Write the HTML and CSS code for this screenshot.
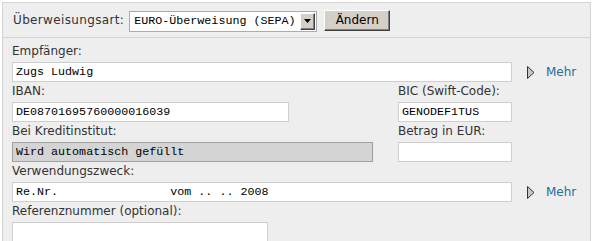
FILE: index.html
```html
<!DOCTYPE html>
<html lang="de">
<head>
  <meta charset="UTF-8">
  <title>Überweisung</title>
  <link rel="stylesheet" href="styles.css">
</head>
<body>
  <div class="panel">
    <div class="header">
      <span class="header-label">Überweisungsart:</span>
      <div class="select">
        <span class="select-value">EURO-Überweisung (SEPA)</span>
        <span class="select-arrow">
          <svg width="7" height="4" viewBox="0 0 7 4"><polygon points="0,0 7,0 3.5,4" fill="#000"/></svg>
        </span>
      </div>
      <button class="btn">Ändern</button>
    </div>

    <div class="form">
      <div class="row">
        <div class="field field-wide">
          <label class="label">Empfänger:</label>
          <input class="input input-wide" value="Zugs Ludwig">
        </div>
        <a href="#" class="more">
          <svg width="8" height="13" viewBox="0 0 8 13"><polygon points="0.5,0.5 7,6.5 0.5,12.5" fill="#c8c8c8" stroke="#333" stroke-width="1"/></svg>
          Mehr
        </a>
      </div>

      <div class="row">
        <div class="field field-left">
          <label class="label">IBAN:</label>
          <input class="input input-iban" value="DE08701695760000016039">
        </div>
        <div class="field">
          <label class="label">BIC (Swift-Code):</label>
          <input class="input input-small" value="GENODEF1TUS">
        </div>
      </div>

      <div class="row">
        <div class="field field-left">
          <label class="label">Bei Kreditinstitut:</label>
          <input class="input input-bank input-disabled" value="Wird automatisch gefüllt" readonly>
        </div>
        <div class="field">
          <label class="label">Betrag in EUR:</label>
          <input class="input input-small" value="">
        </div>
      </div>

      <div class="row">
        <div class="field field-wide">
          <label class="label">Verwendungszweck:</label>
          <input class="input input-wide" value="Re.Nr.                vom .. .. 2008">
        </div>
        <a href="#" class="more">
          <svg width="8" height="13" viewBox="0 0 8 13"><polygon points="0.5,0.5 7,6.5 0.5,12.5" fill="#c8c8c8" stroke="#333" stroke-width="1"/></svg>
          Mehr
        </a>
      </div>

      <div class="row">
        <div class="field">
          <label class="label">Referenznummer (optional):</label>
          <input class="input input-ref" value="">
        </div>
      </div>
    </div>
  </div>
</body>
</html>
```

FILE: styles.css
```css
body {
  margin: 0;
  background-color: #ffffff;
  font-family: "DejaVu Sans", Verdana, sans-serif;
  font-size: 12px;
  color: #333333;
}
.panel {
  margin: 2px 2px 0 2px;
  background-color: #eeeeee;
  border: 1px solid #d4d4d4;
  border-bottom: none;
}
.header {
  display: flex;
  align-items: center;
  height: 34px;
  padding-left: 10px;
  border-bottom: 1px solid #d4d4d4;
}
.header-label {
  margin-right: 5px;
  letter-spacing: 0.35px;
}
.select {
  display: flex;
  align-items: stretch;
  box-sizing: border-box;
  width: 188px;
  height: 21px;
  margin-top: 2px;
  background-color: #ffffff;
  border: 1px solid #a5acb2;
}
.select-value {
  flex: 1;
  padding-left: 4px;
  font-family: "Liberation Mono", "Courier New", monospace;
  font-size: 11.7px;
  line-height: 19px;
  color: #000000;
  white-space: nowrap;
  overflow: hidden;
}
.select-arrow {
  display: flex;
  align-items: center;
  justify-content: center;
  box-sizing: border-box;
  width: 15px;
  margin: 1px;
  background-color: #d4d0c8;
  border: 1px solid;
  border-color: #ffffff #404040 #404040 #ffffff;
  box-shadow: inset -1px -1px #808080;
}
.btn {
  box-sizing: border-box;
  width: 66px;
  height: 21px;
  margin-left: 7px;
  padding: 0;
  font-family: "DejaVu Sans", Verdana, sans-serif;
  font-size: 12px;
  color: #000000;
  background-color: #d4d0c8;
  border: 1px solid;
  border-color: #ffffff #404040 #404040 #ffffff;
  box-shadow: inset -1px -1px #808080;
  cursor: pointer;
}
.form {
  padding: 4px 0 0 9px;
}
.row {
  display: flex;
  align-items: flex-end;
}
.field {
  display: flex;
  flex-direction: column;
}
.field-wide {
  width: 500px;
}
.field-left {
  width: 386px;
}
.label {
  line-height: 18px;
  padding-bottom: 2px;
}
.input {
  box-sizing: border-box;
  height: 20px;
  margin: 0;
  padding: 0 3px;
  font-family: "Liberation Mono", "Courier New", monospace;
  font-size: 11.7px;
  color: #000000;
  background-color: #ffffff;
  border: 1px solid #cfcfcf;
  outline: none;
  white-space: pre;
}
.input-wide {
  width: 500px;
}
.input-iban {
  width: 277px;
}
.input-bank {
  width: 361px;
}
.input-small {
  width: 114px;
}
.input-ref {
  width: 256px;
}
.input-disabled {
  background-color: #d4d4d4;
  border-color: #a0a0a0;
}
.more {
  display: flex;
  align-items: center;
  height: 20px;
  margin-left: 15px;
  gap: 11px;
  color: #2b6a96;
  text-decoration: none;
}
```
